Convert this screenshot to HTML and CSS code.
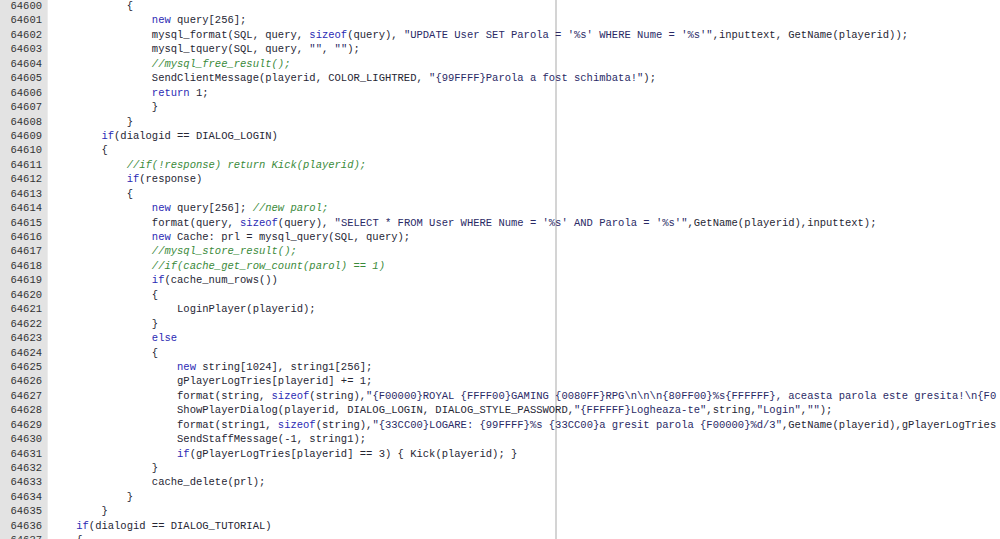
FILE: index.html
```html
<!DOCTYPE html>
<html>
<head>
<meta charset="utf-8">
<link rel="stylesheet" href="styles.css">
</head>
<body>
<div class="editor">
<div class="row"><span class="n">64600</span><span class="c">			{</span></div>
<div class="row"><span class="n">64601</span><span class="c">				<span class="k">new</span> query[256];</span></div>
<div class="row"><span class="n">64602</span><span class="c">				mysql_format(SQL, query, <span class="k">sizeof</span>(query), <span class="s">"UPDATE User SET Parola = '%s' WHERE Nume = '%s'"</span>,inputtext, GetName(playerid));</span></div>
<div class="row"><span class="n">64603</span><span class="c">				mysql_tquery(SQL, query, <span class="s">""</span>, <span class="s">""</span>);</span></div>
<div class="row"><span class="n">64604</span><span class="c">				<span class="m">//mysql_free_result();</span></span></div>
<div class="row"><span class="n">64605</span><span class="c">				SendClientMessage(playerid, COLOR_LIGHTRED, <span class="s">"{99FFFF}Parola a fost schimbata!"</span>);</span></div>
<div class="row"><span class="n">64606</span><span class="c">				<span class="k">return</span> 1;</span></div>
<div class="row"><span class="n">64607</span><span class="c">				}</span></div>
<div class="row"><span class="n">64608</span><span class="c">			}</span></div>
<div class="row"><span class="n">64609</span><span class="c">		<span class="k">if</span>(dialogid == DIALOG_LOGIN)</span></div>
<div class="row"><span class="n">64610</span><span class="c">		{</span></div>
<div class="row"><span class="n">64611</span><span class="c">			<span class="m">//if(!response) return Kick(playerid);</span></span></div>
<div class="row"><span class="n">64612</span><span class="c">			<span class="k">if</span>(response)</span></div>
<div class="row"><span class="n">64613</span><span class="c">			{</span></div>
<div class="row"><span class="n">64614</span><span class="c">				<span class="k">new</span> query[256]; <span class="m">//new parol;</span></span></div>
<div class="row"><span class="n">64615</span><span class="c">				format(query, <span class="k">sizeof</span>(query), <span class="s">"SELECT * FROM User WHERE Nume = '%s' AND Parola = '%s'"</span>,GetName(playerid),inputtext);</span></div>
<div class="row"><span class="n">64616</span><span class="c">				<span class="k">new</span> Cache: prl = mysql_query(SQL, query);</span></div>
<div class="row"><span class="n">64617</span><span class="c">				<span class="m">//mysql_store_result();</span></span></div>
<div class="row"><span class="n">64618</span><span class="c">				<span class="m">//if(cache_get_row_count(parol) == 1)</span></span></div>
<div class="row"><span class="n">64619</span><span class="c">				<span class="k">if</span>(cache_num_rows())</span></div>
<div class="row"><span class="n">64620</span><span class="c">				{</span></div>
<div class="row"><span class="n">64621</span><span class="c">					LoginPlayer(playerid);</span></div>
<div class="row"><span class="n">64622</span><span class="c">				}</span></div>
<div class="row"><span class="n">64623</span><span class="c">				<span class="k">else</span></span></div>
<div class="row"><span class="n">64624</span><span class="c">				{</span></div>
<div class="row"><span class="n">64625</span><span class="c">					<span class="k">new</span> string[1024], string1[256];</span></div>
<div class="row"><span class="n">64626</span><span class="c">					gPlayerLogTries[playerid] += 1;</span></div>
<div class="row"><span class="n">64627</span><span class="c">					format(string, <span class="k">sizeof</span>(string),<span class="s">"{F00000}ROYAL {FFFF00}GAMING {0080FF}RPG\n\n\n{80FF00}%s{FFFFFF}, aceasta parola este gresita!\n{F0</span></span></div>
<div class="row"><span class="n">64628</span><span class="c">					ShowPlayerDialog(playerid, DIALOG_LOGIN, DIALOG_STYLE_PASSWORD,<span class="s">"{FFFFFF}Logheaza-te"</span>,string,<span class="s">"Login"</span>,<span class="s">""</span>);</span></div>
<div class="row"><span class="n">64629</span><span class="c">					format(string1, <span class="k">sizeof</span>(string),<span class="s">"{33CC00}LOGARE: {99FFFF}%s {33CC00}a gresit parola {F00000}%d/3"</span>,GetName(playerid),gPlayerLogTries</span></div>
<div class="row"><span class="n">64630</span><span class="c">					SendStaffMessage(-1, string1);</span></div>
<div class="row"><span class="n">64631</span><span class="c">					<span class="k">if</span>(gPlayerLogTries[playerid] == 3) { Kick(playerid); }</span></div>
<div class="row"><span class="n">64632</span><span class="c">				}</span></div>
<div class="row"><span class="n">64633</span><span class="c">				cache_delete(prl);</span></div>
<div class="row"><span class="n">64634</span><span class="c">			}</span></div>
<div class="row"><span class="n">64635</span><span class="c">		}</span></div>
<div class="row"><span class="n">64636</span><span class="c">	<span class="k">if</span>(dialogid == DIALOG_TUTORIAL)</span></div>
<div class="row"><span class="n">64637</span><span class="c">	{</span></div>
</div>
</body>
</html>
```
FILE: styles.css
```css
html, body {
  margin: 0;
  padding: 0;
  background: #ffffff;
  overflow: hidden;
  width: 1000px;
  height: 539px;
}

.editor {
  margin-top: -1px;
  font-family: "Liberation Mono", "Courier New", monospace;
  font-size: 10.5px;
  line-height: 14.44px;
  color: #262634;
  background-image: linear-gradient(to right, transparent 555px, #d4d4d4 555px, #d4d4d4 557px, transparent 557px);
}

.row {
  display: flex;
  white-space: pre;
  tab-size: 4;
  -moz-tab-size: 4;
}

.n {
  flex: 0 0 48px;
  box-sizing: border-box;
  width: 48px;
  padding-right: 5px;
  text-align: right;
  background: #e3e3e3;
  border-right: 1px solid #ececec;
  color: #333333;
}

.c {
  padding-left: 3px;
  white-space: pre;
}

.k {
  color: #2a2ab4;
}

.s {
  color: #2a2a66;
}

.m {
  color: #3a8a3a;
  font-style: italic;
}
```
